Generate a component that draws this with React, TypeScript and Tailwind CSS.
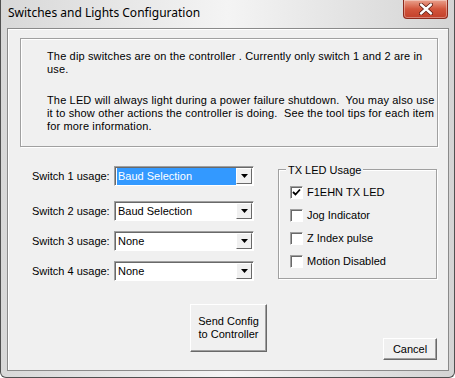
const SANS = "font-['Liberation_Sans',Arial,sans-serif]";

function Combo({ value, selected = false }: { value: string; selected?: boolean }) {
  return (
    <div className="flex h-[20px] w-[140px] items-stretch border border-[#a0a0a0] border-b-white border-r-white bg-white shadow-[inset_1px_1px_0_#696969]">
      <div className="flex flex-1 items-center pl-[2px] pt-px">
        <span
          className={
            selected
              ? "flex h-[17px] w-full items-center bg-[#3399ff] pl-px text-[11px] text-white"
              : "pl-px text-[11px] text-black"
          }
        >
          {value}
        </span>
      </div>
      <div className="mt-px mb-px mr-px flex w-[16px] items-center justify-center border border-white border-b-[#696969] border-r-[#696969] bg-[#f0f0f0]">
        <svg width="7" height="4" viewBox="0 0 7 4">
          <path d="M0 0h7L3.5 4z" fill="#000" />
        </svg>
      </div>
    </div>
  );
}

function Check({ label, checked = false }: { label: string; checked?: boolean }) {
  return (
    <div className="flex h-[13px] items-center gap-[4px]">
      <div className="flex h-[13px] w-[13px] items-center justify-center border border-[#a0a0a0] border-b-white border-r-white bg-white shadow-[inset_1px_1px_0_#696969]">
        {checked ? (
          <svg width="9" height="9" viewBox="0 0 9 9">
            <path d="M1 4l2.5 2.5L8 1.5" stroke="#000" strokeWidth="1.8" fill="none" />
          </svg>
        ) : null}
      </div>
      <span className="text-[11px] text-black">{label}</span>
    </div>
  );
}

function Button({ children, className }: { children: React.ReactNode; className: string }) {
  return (
    <button
      type="button"
      className={`flex flex-col items-center justify-center border border-white border-b-[#696969] border-r-[#696969] bg-[#f0f0f0] text-[11px] leading-[13px] text-black shadow-[inset_-1px_-1px_0_#a0a0a0] ${className}`}
    >
      {children}
    </button>
  );
}

export default function App() {
  return (
    <div
      className={`relative flex h-[378px] w-[455px] flex-col overflow-hidden rounded-b-[6px] border-x border-b border-[#505050] bg-gradient-to-r from-[#d8d8d8] via-[#f4f4f4] to-[#d4d4d4] ${SANS}`}
    >
      {/* title bar */}
      <div className="flex h-[28px] items-start justify-between">
        <span className="pl-[7px] pt-[4px] font-['Noto_Sans',sans-serif] text-[12px] text-black">
          Switches and Lights Configuration
        </span>
        <div className="mr-[6px] flex h-[19px] w-[45px] items-center justify-center rounded-b-[4px] border border-t-0 border-[#8c2a1c] bg-gradient-to-b from-[#e9a18d] via-[#d2553c] to-[#c3402a] shadow-[inset_0_0_0_1px_rgba(255,255,255,0.35)]">
          <svg width="14" height="12" viewBox="0 0 14 12">
            <path d="M2 1.5l10 9M12 1.5l-10 9" stroke="#5a1a10" strokeWidth="4" strokeLinecap="round" />
            <path d="M2 1.5l10 9M12 1.5l-10 9" stroke="#fff" strokeWidth="2.4" strokeLinecap="round" />
          </svg>
        </div>
      </div>

      {/* client area */}
      <div className="ml-[6px] mr-[5px] mb-[6px] flex flex-1 flex-col border border-[#8a8a8a] bg-[#f0f0f0] shadow-[inset_1px_1px_0_#fff]">
        <div className="ml-[12px] mt-[9px] h-[109px] w-[418px] border border-[#a0a0a0] shadow-[1px_1px_0_#fff,inset_1px_1px_0_#fff] pl-[26px] pt-[11px] text-[11px] leading-[13px] tracking-[0.15px] text-black">
          <p>
            The dip switches are on the controller . Currently only switch 1 and 2 are in
            <br />
            use.
          </p>
          <p className="mt-[18px]">
            The LED will always light during a power failure shutdown.&nbsp; You may also use
            <br />
            it to show other actions the controller is doing.&nbsp; See the tool tips for each item
            <br />
            for more information.
          </p>
        </div>

        <div className="flex">
          {/* switches */}
          <div className="ml-[24px] mt-[19px] flex flex-col text-[11px] text-black">
            {[
              { n: 1, v: "Baud Selection", sel: true, mt: "mt-0" },
              { n: 2, v: "Baud Selection", sel: false, mt: "mt-[15px]" },
              { n: 3, v: "None", sel: false, mt: "mt-[10px]" },
              { n: 4, v: "None", sel: false, mt: "mt-[10px]" },
            ].map((row) => (
              <div key={row.n} className={`flex items-center ${row.mt}`}>
                <span className="w-[82px]">Switch {row.n} usage:</span>
                <Combo value={row.v} selected={row.sel} />
              </div>
            ))}
          </div>

          {/* TX LED group */}
          <div className="relative ml-[24px] mt-[22px] h-[110px] w-[159px] border border-[#a0a0a0] shadow-[1px_1px_0_#fff,inset_1px_1px_0_#fff]">
            <span className="absolute -top-[8px] left-[7px] bg-[#f0f0f0] px-[2px] text-[11px] text-black">
              TX LED Usage
            </span>
            <div className="ml-[11px] mt-[16px] flex flex-col gap-[10px]">
              <Check label="F1EHN TX LED" checked />
              <Check label="Jog Indicator" />
              <Check label="Z Index pulse" />
              <Check label="Motion Disabled" />
            </div>
          </div>
        </div>

        <div className="flex items-start">
          <Button className="ml-[182px] mt-[23px] h-[48px] w-[77px]">
            <span>Send Config</span>
            <span>to Controller</span>
          </Button>
          <Button className="ml-[116px] mt-[57px] h-[22px] w-[54px]">Cancel</Button>
        </div>
      </div>
    </div>
  );
}
